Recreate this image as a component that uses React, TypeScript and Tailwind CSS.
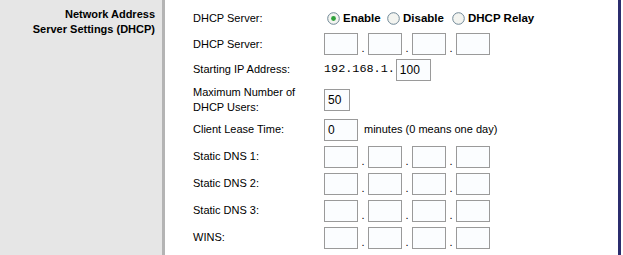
import React from 'react';

const BOX = "h-[22px] border border-[#9a9a9a] bg-[#fbfdff] flex items-center pl-[3px] text-[12px] leading-none";

const IpBoxes = () => (
  <div className="flex items-stretch">
    {[0, 1, 2, 3].map(i => (
      <React.Fragment key={i}>
        {i > 0 && <div className="w-[10px] flex items-end justify-center pb-[1px] text-[11px] leading-[11px]">.</div>}
        <div className={`${BOX} w-[34px]`} />
      </React.Fragment>
    ))}
  </div>
);

const Radio = ({ checked, label, w }: { checked?: boolean; label: string; w: string }) => (
  <div className={`flex shrink-0 items-center gap-[3px] whitespace-nowrap ${w}`}>
    <svg className="shrink-0" width="13" height="13" viewBox="0 0 13 13">
      <circle cx="6.5" cy="6.5" r="5.8" fill="#f3f4f0" stroke="#6f8796" strokeWidth="1" />
      {checked && <circle cx="6.5" cy="6.5" r="2.4" fill="#2ea13a" />}
    </svg>
    <span className="font-bold text-[11.5px]">{label}</span>
  </div>
);

const Row = ({ h, label, children }: { h: string; label: React.ReactNode; children?: React.ReactNode }) => (
  <div className={`flex items-center ${h}`}>
    <div className="w-[131px] shrink-0 leading-[15px]">{label}</div>
    <div className="flex items-center">{children}</div>
  </div>
);

export default function App() {
  return (
    <div className="w-[623px] h-[255px] flex bg-white overflow-hidden font-['Liberation_Sans',Arial,sans-serif] text-[11px] text-black">
      <div className="w-[162px] shrink-0 bg-[#e6e6e6] pt-[7px] pr-[7px] text-right font-bold leading-[15px]">
        Network Address<br />Server Settings (DHCP)
      </div>
      <div className="w-[3px] shrink-0 bg-[#b4b4b4]" />

      <div className="flex-1 pl-[28px] pt-[5px]">
        <Row h="h-[27px]" label="DHCP Server:">
          <div className="flex items-center ml-[3px]">
            <Radio checked label="Enable" w="w-[60px]" />
            <Radio label="Disable" w="w-[65px]" />
            <Radio label="DHCP Relay" w="w-auto" />
          </div>
        </Row>
        <Row h="h-[24px]" label="DHCP Server:">
          <IpBoxes />
        </Row>
        <Row h="h-[27px]" label="Starting IP Address:">
          <span className="font-['Liberation_Mono',monospace] text-[11.8px] mr-[1px]">192.168.1.</span>
          <div className={`${BOX} w-[35px]`}>100</div>
        </Row>
        <Row h="h-[33px]" label={<>Maximum Number of<br />DHCP Users:</>}>
          <div className={`${BOX} w-[26px]`}>50</div>
        </Row>
        <Row h="h-[27px]" label="Client Lease Time:">
          <div className={`${BOX} w-[34px]`}>0</div>
          <span className="ml-[6px]">minutes (0 means one day)</span>
        </Row>
        <Row h="h-[27px]" label="Static DNS 1:">
          <IpBoxes />
        </Row>
        <Row h="h-[27px]" label="Static DNS 2:">
          <IpBoxes />
        </Row>
        <Row h="h-[27px]" label="Static DNS 3:">
          <IpBoxes />
        </Row>
        <Row h="h-[27px]" label="WINS:">
          <IpBoxes />
        </Row>
      </div>

      <div className="w-[3px] shrink-0 bg-[#2b2d6e]" />
      <div className="w-[2px] shrink-0 bg-white" />
    </div>
  );
}
